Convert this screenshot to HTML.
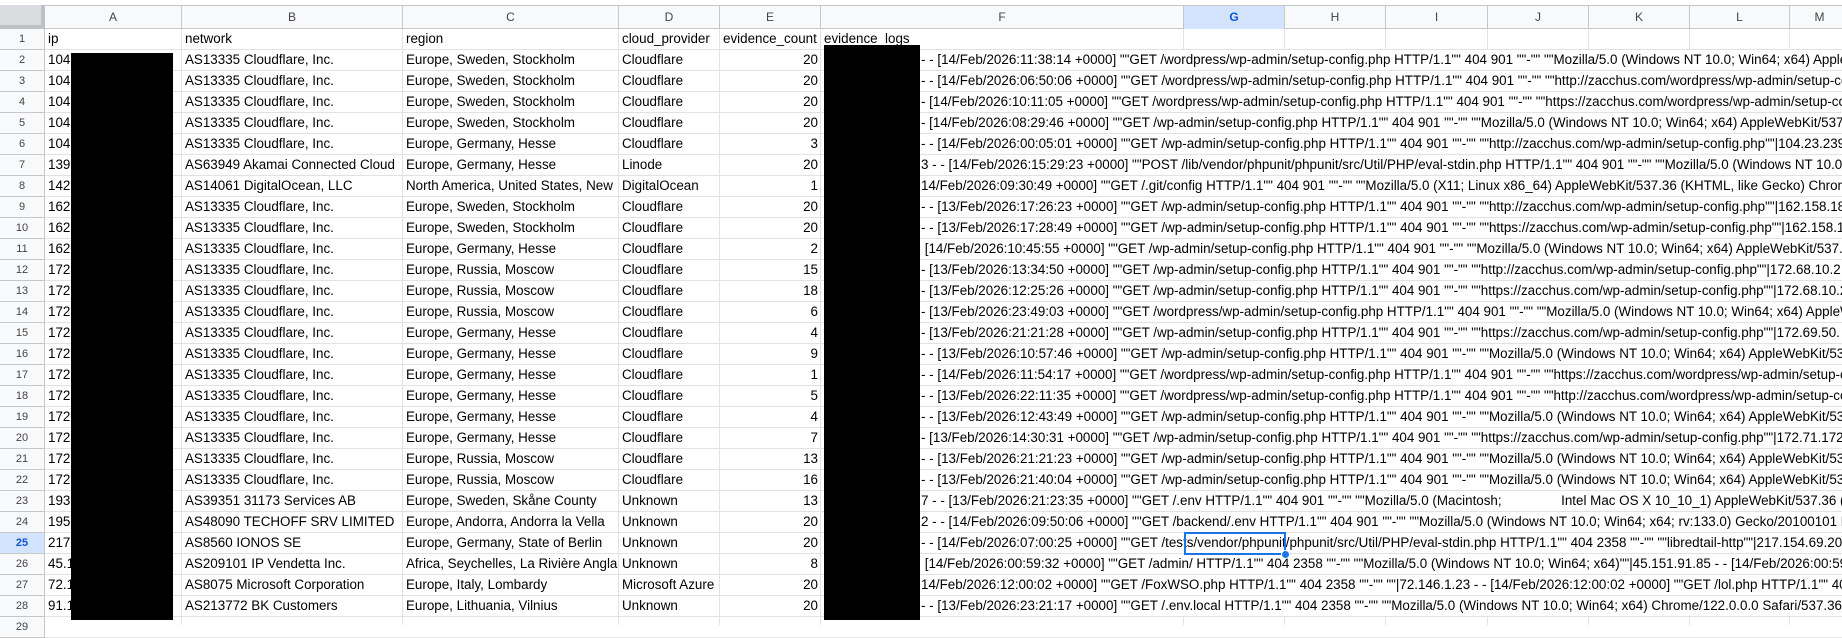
<!DOCTYPE html>
<html><head><meta charset="utf-8"><style>
*{margin:0;padding:0;box-sizing:border-box}
body{width:1842px;height:625px;overflow:hidden;background:#fff;position:relative;font-family:"Liberation Sans",Arial,sans-serif;font-size:13.4px;color:#000}
.hdr{position:absolute;top:5px;left:0;width:1842px;height:24px;background:#f8f9fa;border-top:1px solid #c7c7c7;border-bottom:1px solid #c7c7c7}
.hc{position:absolute;top:0;height:23px;line-height:23px;text-align:center;font-size:12px;color:#444;border-right:1px solid #c7c7c7}
.corner{position:absolute;left:0;top:5px;width:45px;height:24px;background:#dadce0;border-right:4px solid #bdc1c6;border-bottom:4px solid #bdc1c6}
.r{position:absolute;left:0;width:1842px;height:21px;border-bottom:1px solid #e2e2e2}
.n{position:absolute;left:0;top:0;width:45px;height:21px;background:#f8f9fa;border-right:1px solid #c7c7c7;border-bottom:1px solid #c7c7c7;text-align:center;font-size:11px;color:#444;line-height:20px}
.c{position:absolute;top:0;height:20px;line-height:20px;white-space:pre;overflow:hidden;padding-left:3px}
.a{left:45px;width:137px}.b{left:182px;width:221px}.cc{left:403px;width:216px}.d{left:619px;width:101px}.e{left:720px;width:101px;text-align:right;padding-right:3px}
.f{left:921px;width:921px;padding-left:0}
.f1{left:821px;width:363px}
.v{position:absolute;width:1px;background:#e2e2e2}
.blk{position:absolute;background:#000}
</style></head><body>
<div class="hdr">
<div class="hc" style="left:45px;width:137px">A</div>
<div class="hc" style="left:182px;width:221px">B</div>
<div class="hc" style="left:403px;width:216px">C</div>
<div class="hc" style="left:619px;width:101px">D</div>
<div class="hc" style="left:720px;width:101px">E</div>
<div class="hc" style="left:821px;width:363px">F</div>
<div class="hc" style="left:1184px;width:101px;background:#d3e3fd;color:#0b57d0;font-weight:bold">G</div>
<div class="hc" style="left:1285px;width:101px">H</div>
<div class="hc" style="left:1386px;width:102px">I</div>
<div class="hc" style="left:1488px;width:101px">J</div>
<div class="hc" style="left:1589px;width:101px">K</div>
<div class="hc" style="left:1690px;width:100px">L</div>
<div class="hc" style="left:1790px;width:60px">M</div>
</div>
<div class="corner"></div>

<div class="v" style="left:181px;top:29px;height:596px"></div>
<div class="v" style="left:402px;top:29px;height:596px"></div>
<div class="v" style="left:618px;top:29px;height:596px"></div>
<div class="v" style="left:719px;top:29px;height:596px"></div>
<div class="v" style="left:820px;top:29px;height:596px"></div>
<div class="v" style="left:1183px;top:29px;height:21px"></div>
<div class="v" style="left:1284px;top:29px;height:21px"></div>
<div class="v" style="left:1385px;top:29px;height:21px"></div>
<div class="v" style="left:1487px;top:29px;height:21px"></div>
<div class="v" style="left:1588px;top:29px;height:21px"></div>
<div class="v" style="left:1689px;top:29px;height:21px"></div>
<div class="v" style="left:1789px;top:29px;height:21px"></div>
<div class="v" style="left:1183px;top:617px;height:8px"></div>
<div class="v" style="left:1284px;top:617px;height:8px"></div>
<div class="v" style="left:1385px;top:617px;height:8px"></div>
<div class="v" style="left:1487px;top:617px;height:8px"></div>
<div class="v" style="left:1588px;top:617px;height:8px"></div>
<div class="v" style="left:1689px;top:617px;height:8px"></div>
<div class="v" style="left:1789px;top:617px;height:8px"></div>

<div class="r" style="top:29px"><div class="n">1</div><div class="c a">ip</div><div class="c b">network</div><div class="c cc">region</div><div class="c d">cloud_provider</div><div class="c e" style="text-align:left;padding-left:3px;overflow:visible">evidence_count</div><div class="c f1">evidence_logs</div></div>
<div class="r" style="top:50px"><div class="n">2</div><div class="c a">104</div><div class="c b">AS13335 Cloudflare, Inc.</div><div class="c cc">Europe, Sweden, Stockholm</div><div class="c d">Cloudflare</div><div class="c e">20</div><div class="c f">- - [14/Feb/2026:11:38:14 +0000] ""GET /wordpress/wp-admin/setup-config.php HTTP/1.1"" 404 901 ""-"" ""Mozilla/5.0 (Windows NT 10.0; Win64; x64) AppleWebKit/537.36</div></div>
<div class="r" style="top:71px"><div class="n">3</div><div class="c a">104</div><div class="c b">AS13335 Cloudflare, Inc.</div><div class="c cc">Europe, Sweden, Stockholm</div><div class="c d">Cloudflare</div><div class="c e">20</div><div class="c f">- - [14/Feb/2026:06:50:06 +0000] ""GET /wordpress/wp-admin/setup-config.php HTTP/1.1"" 404 901 ""-"" ""http://zacchus.com/wordpress/wp-admin/setup-config.php</div></div>
<div class="r" style="top:92px"><div class="n">4</div><div class="c a">104</div><div class="c b">AS13335 Cloudflare, Inc.</div><div class="c cc">Europe, Sweden, Stockholm</div><div class="c d">Cloudflare</div><div class="c e">20</div><div class="c f">- [14/Feb/2026:10:11:05 +0000] ""GET /wordpress/wp-admin/setup-config.php HTTP/1.1"" 404 901 ""-"" ""https://zacchus.com/wordpress/wp-admin/setup-config.php</div></div>
<div class="r" style="top:113px"><div class="n">5</div><div class="c a">104</div><div class="c b">AS13335 Cloudflare, Inc.</div><div class="c cc">Europe, Sweden, Stockholm</div><div class="c d">Cloudflare</div><div class="c e">20</div><div class="c f">- [14/Feb/2026:08:29:46 +0000] ""GET /wp-admin/setup-config.php HTTP/1.1"" 404 901 ""-"" ""Mozilla/5.0 (Windows NT 10.0; Win64; x64) AppleWebKit/537.36</div></div>
<div class="r" style="top:134px"><div class="n">6</div><div class="c a">104</div><div class="c b">AS13335 Cloudflare, Inc.</div><div class="c cc">Europe, Germany, Hesse</div><div class="c d">Cloudflare</div><div class="c e">3</div><div class="c f">- - [14/Feb/2026:00:05:01 +0000] ""GET /wp-admin/setup-config.php HTTP/1.1"" 404 901 ""-"" ""http://zacchus.com/wp-admin/setup-config.php""|104.23.239.</div></div>
<div class="r" style="top:155px"><div class="n">7</div><div class="c a">139</div><div class="c b">AS63949 Akamai Connected Cloud</div><div class="c cc">Europe, Germany, Hesse</div><div class="c d">Linode</div><div class="c e">20</div><div class="c f">3 - - [14/Feb/2026:15:29:23 +0000] ""POST /lib/vendor/phpunit/phpunit/src/Util/PHP/eval-stdin.php HTTP/1.1"" 404 901 ""-"" ""Mozilla/5.0 (Windows NT 10.0; Win64;</div></div>
<div class="r" style="top:176px"><div class="n">8</div><div class="c a">142</div><div class="c b">AS14061 DigitalOcean, LLC</div><div class="c cc">North America, United States, New</div><div class="c d">DigitalOcean</div><div class="c e">1</div><div class="c f">14/Feb/2026:09:30:49 +0000] ""GET /.git/config HTTP/1.1"" 404 901 ""-"" ""Mozilla/5.0 (X11; Linux x86_64) AppleWebKit/537.36 (KHTML, like Gecko) Chrome/</div></div>
<div class="r" style="top:197px"><div class="n">9</div><div class="c a">162</div><div class="c b">AS13335 Cloudflare, Inc.</div><div class="c cc">Europe, Sweden, Stockholm</div><div class="c d">Cloudflare</div><div class="c e">20</div><div class="c f">- - [13/Feb/2026:17:26:23 +0000] ""GET /wp-admin/setup-config.php HTTP/1.1"" 404 901 ""-"" ""http://zacchus.com/wp-admin/setup-config.php""|162.158.18</div></div>
<div class="r" style="top:218px"><div class="n">10</div><div class="c a">162</div><div class="c b">AS13335 Cloudflare, Inc.</div><div class="c cc">Europe, Sweden, Stockholm</div><div class="c d">Cloudflare</div><div class="c e">20</div><div class="c f">- - [13/Feb/2026:17:28:49 +0000] ""GET /wp-admin/setup-config.php HTTP/1.1"" 404 901 ""-"" ""https://zacchus.com/wp-admin/setup-config.php""|162.158.1</div></div>
<div class="r" style="top:239px"><div class="n">11</div><div class="c a">162</div><div class="c b">AS13335 Cloudflare, Inc.</div><div class="c cc">Europe, Germany, Hesse</div><div class="c d">Cloudflare</div><div class="c e">2</div><div class="c f"> [14/Feb/2026:10:45:55 +0000] ""GET /wp-admin/setup-config.php HTTP/1.1"" 404 901 ""-"" ""Mozilla/5.0 (Windows NT 10.0; Win64; x64) AppleWebKit/537.</div></div>
<div class="r" style="top:260px"><div class="n">12</div><div class="c a">172</div><div class="c b">AS13335 Cloudflare, Inc.</div><div class="c cc">Europe, Russia, Moscow</div><div class="c d">Cloudflare</div><div class="c e">15</div><div class="c f">- [13/Feb/2026:13:34:50 +0000] ""GET /wp-admin/setup-config.php HTTP/1.1"" 404 901 ""-"" ""http://zacchus.com/wp-admin/setup-config.php""|172.68.10.2</div></div>
<div class="r" style="top:281px"><div class="n">13</div><div class="c a">172</div><div class="c b">AS13335 Cloudflare, Inc.</div><div class="c cc">Europe, Russia, Moscow</div><div class="c d">Cloudflare</div><div class="c e">18</div><div class="c f">- [13/Feb/2026:12:25:26 +0000] ""GET /wp-admin/setup-config.php HTTP/1.1"" 404 901 ""-"" ""https://zacchus.com/wp-admin/setup-config.php""|172.68.10.2</div></div>
<div class="r" style="top:302px"><div class="n">14</div><div class="c a">172</div><div class="c b">AS13335 Cloudflare, Inc.</div><div class="c cc">Europe, Russia, Moscow</div><div class="c d">Cloudflare</div><div class="c e">6</div><div class="c f">- [13/Feb/2026:23:49:03 +0000] ""GET /wordpress/wp-admin/setup-config.php HTTP/1.1"" 404 901 ""-"" ""Mozilla/5.0 (Windows NT 10.0; Win64; x64) AppleWebKit</div></div>
<div class="r" style="top:323px"><div class="n">15</div><div class="c a">172</div><div class="c b">AS13335 Cloudflare, Inc.</div><div class="c cc">Europe, Germany, Hesse</div><div class="c d">Cloudflare</div><div class="c e">4</div><div class="c f">- [13/Feb/2026:21:21:28 +0000] ""GET /wp-admin/setup-config.php HTTP/1.1"" 404 901 ""-"" ""https://zacchus.com/wp-admin/setup-config.php""|172.69.50.</div></div>
<div class="r" style="top:344px"><div class="n">16</div><div class="c a">172</div><div class="c b">AS13335 Cloudflare, Inc.</div><div class="c cc">Europe, Germany, Hesse</div><div class="c d">Cloudflare</div><div class="c e">9</div><div class="c f">- - [13/Feb/2026:10:57:46 +0000] ""GET /wp-admin/setup-config.php HTTP/1.1"" 404 901 ""-"" ""Mozilla/5.0 (Windows NT 10.0; Win64; x64) AppleWebKit/537.</div></div>
<div class="r" style="top:365px"><div class="n">17</div><div class="c a">172</div><div class="c b">AS13335 Cloudflare, Inc.</div><div class="c cc">Europe, Germany, Hesse</div><div class="c d">Cloudflare</div><div class="c e">1</div><div class="c f">- - [14/Feb/2026:11:54:17 +0000] ""GET /wordpress/wp-admin/setup-config.php HTTP/1.1"" 404 901 ""-"" ""https://zacchus.com/wordpress/wp-admin/setup-config.</div></div>
<div class="r" style="top:386px"><div class="n">18</div><div class="c a">172</div><div class="c b">AS13335 Cloudflare, Inc.</div><div class="c cc">Europe, Germany, Hesse</div><div class="c d">Cloudflare</div><div class="c e">5</div><div class="c f">- - [13/Feb/2026:22:11:35 +0000] ""GET /wordpress/wp-admin/setup-config.php HTTP/1.1"" 404 901 ""-"" ""http://zacchus.com/wordpress/wp-admin/setup-config.</div></div>
<div class="r" style="top:407px"><div class="n">19</div><div class="c a">172</div><div class="c b">AS13335 Cloudflare, Inc.</div><div class="c cc">Europe, Germany, Hesse</div><div class="c d">Cloudflare</div><div class="c e">4</div><div class="c f">- - [13/Feb/2026:12:43:49 +0000] ""GET /wp-admin/setup-config.php HTTP/1.1"" 404 901 ""-"" ""Mozilla/5.0 (Windows NT 10.0; Win64; x64) AppleWebKit/537.36</div></div>
<div class="r" style="top:428px"><div class="n">20</div><div class="c a">172</div><div class="c b">AS13335 Cloudflare, Inc.</div><div class="c cc">Europe, Germany, Hesse</div><div class="c d">Cloudflare</div><div class="c e">7</div><div class="c f">- [13/Feb/2026:14:30:31 +0000] ""GET /wp-admin/setup-config.php HTTP/1.1"" 404 901 ""-"" ""https://zacchus.com/wp-admin/setup-config.php""|172.71.172.</div></div>
<div class="r" style="top:449px"><div class="n">21</div><div class="c a">172</div><div class="c b">AS13335 Cloudflare, Inc.</div><div class="c cc">Europe, Russia, Moscow</div><div class="c d">Cloudflare</div><div class="c e">13</div><div class="c f">- - [13/Feb/2026:21:21:23 +0000] ""GET /wp-admin/setup-config.php HTTP/1.1"" 404 901 ""-"" ""Mozilla/5.0 (Windows NT 10.0; Win64; x64) AppleWebKit/537.36</div></div>
<div class="r" style="top:470px"><div class="n">22</div><div class="c a">172</div><div class="c b">AS13335 Cloudflare, Inc.</div><div class="c cc">Europe, Russia, Moscow</div><div class="c d">Cloudflare</div><div class="c e">16</div><div class="c f">- - [13/Feb/2026:21:40:04 +0000] ""GET /wp-admin/setup-config.php HTTP/1.1"" 404 901 ""-"" ""Mozilla/5.0 (Windows NT 10.0; Win64; x64) AppleWebKit/537.36""|172.71.184.</div></div>
<div class="r" style="top:491px"><div class="n">23</div><div class="c a">193</div><div class="c b">AS39351 31173 Services AB</div><div class="c cc">Europe, Sweden, Skåne County</div><div class="c d">Unknown</div><div class="c e">13</div><div class="c f">7 - - [13/Feb/2026:21:23:35 +0000] ""GET /.env HTTP/1.1"" 404 901 ""-"" ""Mozilla/5.0 (Macintosh;                Intel Mac OS X 10_10_1) AppleWebKit/537.36 (KHTML</div></div>
<div class="r" style="top:512px"><div class="n">24</div><div class="c a">195</div><div class="c b">AS48090 TECHOFF SRV LIMITED</div><div class="c cc">Europe, Andorra, Andorra la Vella</div><div class="c d">Unknown</div><div class="c e">20</div><div class="c f">2 - - [14/Feb/2026:09:50:06 +0000] ""GET /backend/.env HTTP/1.1"" 404 901 ""-"" ""Mozilla/5.0 (Windows NT 10.0; Win64; x64; rv:133.0) Gecko/20100101 Firefox/</div></div>
<div class="r" style="top:533px"><div class="n" style="background:#d3e3fd;color:#0b57d0;font-weight:bold">25</div><div class="c a">217</div><div class="c b">AS8560 IONOS SE</div><div class="c cc">Europe, Germany, State of Berlin</div><div class="c d">Unknown</div><div class="c e">20</div><div class="c f">- - [14/Feb/2026:07:00:25 +0000] ""GET /tests/vendor/phpunit/phpunit/src/Util/PHP/eval-stdin.php HTTP/1.1"" 404 2358 ""-"" ""libredtail-http""|217.154.69.20</div></div>
<div class="r" style="top:554px"><div class="n">26</div><div class="c a">45.1</div><div class="c b">AS209101 IP Vendetta Inc.</div><div class="c cc">Africa, Seychelles, La Rivière Angla</div><div class="c d">Unknown</div><div class="c e">8</div><div class="c f"> [14/Feb/2026:00:59:32 +0000] ""GET /admin/ HTTP/1.1"" 404 2358 ""-"" ""Mozilla/5.0 (Windows NT 10.0; Win64; x64)""|45.151.91.85 - - [14/Feb/2026:00:59</div></div>
<div class="r" style="top:575px"><div class="n">27</div><div class="c a">72.1</div><div class="c b">AS8075 Microsoft Corporation</div><div class="c cc">Europe, Italy, Lombardy</div><div class="c d">Microsoft Azure</div><div class="c e">20</div><div class="c f">14/Feb/2026:12:00:02 +0000] ""GET /FoxWSO.php HTTP/1.1"" 404 2358 ""-"" ""|72.146.1.23 - - [14/Feb/2026:12:00:02 +0000] ""GET /lol.php HTTP/1.1"" 40</div></div>
<div class="r" style="top:596px"><div class="n">28</div><div class="c a">91.1</div><div class="c b">AS213772 BK Customers</div><div class="c cc">Europe, Lithuania, Vilnius</div><div class="c d">Unknown</div><div class="c e">20</div><div class="c f">- - [13/Feb/2026:23:21:17 +0000] ""GET /.env.local HTTP/1.1"" 404 2358 ""-"" ""Mozilla/5.0 (Windows NT 10.0; Win64; x64) Chrome/122.0.0.0 Safari/537.36</div></div>
<div class="r" style="top:617px"><div class="n">29</div></div>

<div class="blk" style="left:71px;top:53px;width:102px;height:567px"></div>
<div class="blk" style="left:824px;top:45px;width:96px;height:575px"></div>

<div style="position:absolute;left:1184px;top:532px;width:102px;height:23px;border:2px solid #1a73e8"></div>
<div style="position:absolute;left:1281px;top:550px;width:9px;height:9px;border-radius:50%;background:#1a73e8;border:1px solid #fff"></div>
</body></html>
